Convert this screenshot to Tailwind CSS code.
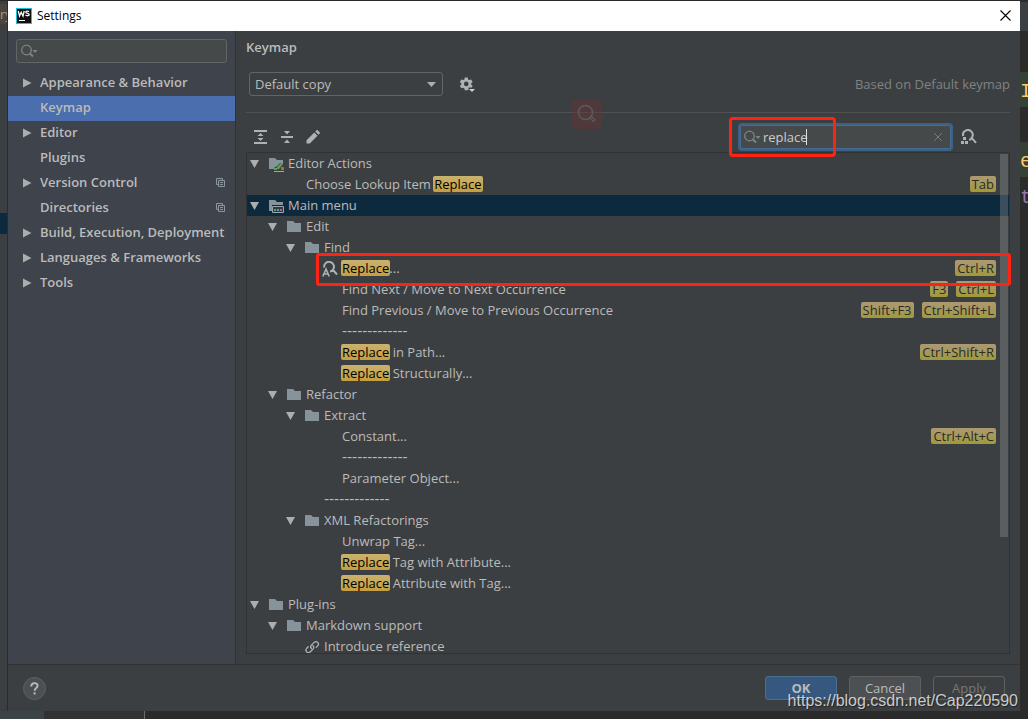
<!DOCTYPE html>
<html lang="en">
<head>
<meta charset="utf-8">
<title>Settings</title>
<script src="https://cdn.jsdelivr.net/npm/@tailwindcss/browser@4"></script>
</head>
<body class="relative h-screen overflow-hidden bg-[#2b2b2b] font-['Open_Sans','Noto_Sans',sans-serif] text-[13px] leading-[21px] text-[#bbbbbb]">

<svg class="hidden" aria-hidden="true">
  <symbol id="down" viewBox="0 0 10 10"><path d="M0 1h9L4.500 9z" fill="#adadad"/></symbol>
  <symbol id="right" viewBox="0 0 10 10"><path d="M0 0.500v9L8.500 5z" fill="#adadad"/></symbol>
  <symbol id="folder" viewBox="0 0 16 16"><path d="M0 2h6l2 2h6v9H0z" fill="#87939a"/></symbol>
  <symbol id="lens" viewBox="0 0 18 14"><g fill="none" stroke="#7b8489"><circle cx="5.500" cy="6" r="4.800" stroke-width="1.300"/><path d="M9 9.500l3 3" stroke-width="2"/></g><path d="M11.500 6h5L14 9z" fill="#7b8489"/></symbol>
  <symbol id="copy" viewBox="0 0 10 10"><path d="M2.500 6.500h-2v-6h6v2M2.500 2.500h6v6h-6zM4 4.500h3M4 6.500h3" fill="none" stroke="#8c979d"/></symbol>
</svg>

<!-- Editor window behind the dialog -->
<div class="absolute inset-y-0 left-0 w-[7px] overflow-hidden bg-[#3c3f41]">
  <div class="absolute inset-x-0 top-1 h-5 overflow-hidden bg-[#4b453c] text-[#a09a90] leading-5">ry</div>
  <div class="absolute inset-x-0 top-[213px] h-[21px] bg-[#0d293e]"></div>
</div>
<div class="absolute top-0 left-0 right-0 h-px bg-[#2b2b2b]"></div>
<div class="absolute inset-y-0 right-0 w-2 overflow-hidden font-['Liberation_Mono',monospace] text-[20px]">
  <div class="absolute inset-x-0 top-[2px] h-[29px] bg-[#3c3f41]"></div>
  <div class="absolute inset-x-0 top-[72px] h-[35px] bg-[#344134] leading-[40px] text-[#ffc66d]">I</div>
  <div class="absolute inset-x-0 top-[142px] h-[35px] bg-[#344134] leading-[40px] text-[#ffc66d]">e</div>
  <div class="absolute inset-x-0 top-[178px] h-[35px] leading-[40px] text-[#9876aa]">t</div>
</div>
<div class="absolute bottom-0 left-0 flex h-2">
  <div class="w-11 bg-[#3c4347]"></div>
  <div class="w-[101px] border-r border-[#6b6b6b] bg-[#323232]"></div>
</div>

<!-- Settings dialog -->
<div class="relative flex h-full flex-col px-2 pt-px pb-2">
<div role="dialog" aria-label="Settings" class="flex min-h-0 flex-1 flex-col bg-[#3c3f41] shadow-[-1px_0_0_#2b2b2b]">
  <header class="flex h-[30px] shrink-0 items-center bg-white pr-[7px] pl-2 text-black">
    <svg class="size-4" viewBox="0 0 16 16" aria-hidden="true"><rect width="16" height="16" fill="#19c0d8"/><rect x="1" y="1" width="14" height="14" fill="#101010"/><path d="M2.300 3l1.200 5L5.200 4.200 7 8l1.200-5M13 3.800c-1.200-1-3.200-.8-3.200.5 0 1.500 3.400.8 3.400 2.300 0 1.300-2.400 1.500-3.700.5" fill="none" stroke="#fff" stroke-width="1.300"/><path d="M3 12h6v1H3z" fill="#fff"/></svg>
    <h1 class="ml-[5px] flex-1 pb-px text-[12px]">Settings</h1>
    <button aria-label="Close" class="p-0.5 pb-1"><svg class="size-[11px]" viewBox="0 0 11 11"><path d="M.5.5l10 10M10.500.5l-10 10" stroke="#000" stroke-width="1.100"/></svg></button>
  </header>

  <div class="flex min-h-0 flex-1">
    <nav class="flex w-[228px] shrink-0 flex-col border-r border-[#323232] bg-[#3e434c] font-semibold" aria-label="Settings sections">
      <label class="mx-2 my-2 flex h-6 items-center rounded-[3px] border border-[#646464] bg-[#45494a] pl-1">
        <svg class="h-[14px] w-[18px]"><use href="#lens"/></svg>
        <input aria-label="Search settings" class="min-w-0 flex-1 font-normal outline-none">
      </label>
      <a href="#" class="flex h-[25px] items-center pb-0.5 pl-[15px]"><svg class="mr-[7px] size-[10px]"><use href="#right"/></svg>Appearance &amp; Behavior</a>
      <a href="#" aria-current="page" class="flex h-[25px] items-center bg-[#4b6eaf] pb-0.5 pl-8">Keymap</a>
      <a href="#" class="flex h-[25px] items-center pb-0.5 pl-[15px]"><svg class="mr-[7px] size-[10px]"><use href="#right"/></svg>Editor</a>
      <a href="#" class="flex h-[25px] items-center pb-0.5 pl-8">Plugins</a>
      <a href="#" class="flex h-[25px] items-center pr-[9px] pb-0.5 pl-[15px]"><svg class="mr-[7px] size-[10px]"><use href="#right"/></svg><span class="flex-1">Version Control</span><svg class="size-[10px]"><use href="#copy"/></svg></a>
      <a href="#" class="flex h-[25px] items-center pr-[9px] pb-0.5 pl-8"><span class="flex-1">Directories</span><svg class="size-[10px]"><use href="#copy"/></svg></a>
      <a href="#" class="flex h-[25px] items-center pb-0.5 pl-[15px] whitespace-nowrap"><svg class="mr-[7px] size-[10px]"><use href="#right"/></svg>Build, Execution, Deployment</a>
      <a href="#" class="flex h-[25px] items-center pb-0.5 pl-[15px]"><svg class="mr-[7px] size-[10px]"><use href="#right"/></svg>Languages &amp; Frameworks</a>
      <a href="#" class="flex h-[25px] items-center pb-0.5 pl-[15px]"><svg class="mr-[7px] size-[10px]"><use href="#right"/></svg>Tools</a>
    </nav>

    <main class="relative flex min-w-0 flex-1 flex-col px-[10px] pb-[10px]">
      <h2 class="flex h-8 shrink-0 items-center font-semibold">Keymap</h2>
      <div class="mt-[9px] mb-4 flex h-6 shrink-0 items-center pl-[3px]">
        <div class="relative">
          <select aria-label="Keymap" class="block h-6 w-[194px] appearance-none rounded-[3px] border border-[#646464] bg-[#3c3f41] pl-[5px] leading-5 outline-none"><option>Default copy</option></select>
          <svg class="pointer-events-none absolute top-[10px] right-[6px] h-[5px] w-[10px]" viewBox="0 0 10 5"><path d="M0 0h9L4.500 5z" fill="#adadad"/></svg>
        </div>
        <button aria-label="Keymap actions" class="ml-4"><svg class="size-4" viewBox="0 0 16 16"><path fill="#afb1b3" fill-rule="evenodd" d="M5.800 1.500h2.900l.4 1.900 1.200.7 1.900-.6 1.400 2.400-1.400 1.300v1.400l1.400 1.300-.8 1.500H9.500v2l-.8.900H5.800l-.4-1.900-1.200-.7-1.900.6L.9 9.900l1.400-1.300V7.200L.9 5.900l1.400-2.400 1.900.6 1.200-.7zM7.250 5.600a2.300 2.300 0 100 4.600 2.300 2.300 0 000-4.600z"/><path d="M10 13h6l-3 3z" fill="#d0d0d0"/></svg></button>
        <p class="ml-auto text-[#7f8284]">Based on Default keymap</p>
      </div>
      <div class="h-px shrink-0 bg-[#515151]"></div>
      <div class="flex shrink-0 items-center pt-[10px] pb-px">
        <button aria-label="Expand all" class="ml-[7px]"><svg class="size-4" viewBox="0 0 16 16"><path d="M1 1h13v2H1zM1 13h13v2H1zM7.500 4l3 3h-6zM7.500 12l3-3h-6z" fill="#afb1b3"/></svg></button>
        <button aria-label="Collapse all" class="ml-[10px]"><svg class="size-4" viewBox="0 0 16 16"><path d="M2 7h12v2H2zM8 5.500l3-3.500H5zM8 10.500l3 3.500H5z" fill="#afb1b3"/></svg></button>
        <button aria-label="Edit shortcut" class="ml-[10px]"><svg class="size-4" viewBox="0 0 16 16"><path d="M1.500 14.500v-3.300l7.800-7.700 3.200 3.200-7.700 7.800zM10.200 2.600l1.200-1.200c.5-.5 1-.5 1.500 0l1.800 1.800c.5.500.5 1 0 1.400L13.400 5.800z" fill="#afb1b3"/></svg></button>
        <label class="relative ml-auto flex h-7 w-[215px] items-center rounded-[4px] border-2 border-[#3d6185] bg-[#45494a] pl-1 text-[#cccccc] shadow-[inset_0_0_0_1px_#466d94]">
          <svg class="h-[14px] w-[18px]"><use href="#lens"/></svg>
          <input aria-label="Search actions" value="replace" class="ml-px min-w-0 flex-1 outline-none">
          <span class="absolute top-1 left-[66px] h-4 w-px bg-[#dddddd]"></span>
          <button aria-label="Clear search" class="mr-[9px]"><svg class="size-2" viewBox="0 0 8 8"><path d="M0 0l8 8M8 0L0 8" stroke="#767a7c"/></svg></button>
        </label>
        <button aria-label="Find actions by shortcut" class="mr-[33px] ml-2"><svg class="size-4" viewBox="0 0 16 16"><path d="M2.200 7A4.800 4.800 0 1110 9.500M8 10.800c1.300 0 2.200-.6 3-1.600l4 4.600" fill="none" stroke="#afb1b3" stroke-width="2"/><path d="M0 12h3v3H0zM4 12h3v3H4zM2 8h3v3H2z" fill="#afb1b3"/></svg></button>
      </div>

      <div class="relative min-h-0 flex-1 overflow-hidden border border-[#323232]">
        <ul role="tree" aria-label="Actions">
          <li role="treeitem" aria-expanded="true" class="flex h-[21px] items-center pl-[3px]"><svg class="mr-[9px] size-[10px]"><use href="#down"/></svg><svg class="mr-[3px] size-4" viewBox="0 0 16 16"><path d="M0 2h6l2 2h6v4l-3-1-3 3-3 2v1H0z" fill="#87939a"/><path d="M5 12h3v2H5zM8 11l4-4 2 1-4 5H8z" fill="#57a64a"/><path d="M12 11h3v3h-3z" fill="#c75d3a"/><path d="M5 15.500h10" stroke="#9aa7b0"/></svg>Editor Actions</li>
          <li role="treeitem" class="flex h-[21px] items-center pr-[13px] pl-[59px]"><span class="flex-1">Choose Lookup Item <mark class="-mx-px inline-block rounded-[2px] bg-linear-to-b from-[#c9b26e] to-[#c59f3d] px-px leading-4 text-black">Replace</mark></span><kbd class="mb-px rounded-[2px] bg-linear-to-b from-[#ad9873] to-[#a09a36] px-[2px] font-[inherit] leading-4 text-[#2b2b2b]">Tab</kbd></li>
          <li role="treeitem" aria-expanded="true" aria-selected="true" class="flex h-[21px] items-center bg-[#0d293e] pl-[3px]"><svg class="mr-[9px] size-[10px]"><use href="#down"/></svg><svg class="mr-[3px] size-4" viewBox="0 0 16 16"><path d="M0 2h6l2 2h6v3H3v6H0z" fill="#87939a"/><path d="M3.500 8.500h11v6h-11z" fill="#2d3b45" stroke="#9aa7b0"/><path d="M5 11h2v2H5z" fill="#57a64a"/><path d="M8 11h2v2H8z" fill="#40a0d8"/><path d="M11 11h2v2h-2z" fill="#d06040"/></svg>Main menu</li>
          <li role="treeitem" aria-expanded="true" class="flex h-[21px] items-center pl-[21px]"><svg class="mr-[9px] size-[10px]"><use href="#down"/></svg><svg class="mr-[3px] size-4"><use href="#folder"/></svg>Edit</li>
          <li role="treeitem" aria-expanded="true" class="flex h-[21px] items-center pl-[39px]"><svg class="mr-[9px] size-[10px]"><use href="#down"/></svg><svg class="mr-[3px] size-4"><use href="#folder"/></svg>Find</li>
          <li role="treeitem" class="flex h-[21px] items-center pr-[13px] pl-[75px]"><svg class="mr-1 size-4" viewBox="0 0 16 16"><path d="M2.200 6.500A4.900 4.900 0 1111 8.600M8 10.400c1.300 0 2.200-.6 3-1.500l4 4.600" fill="none" stroke="#afb1b3" stroke-width="2"/><path d="M.8 15.500L4 8l3.200 7.500M2 13h4" fill="none" stroke="#afb1b3" stroke-width="1.600"/></svg><span class="flex-1"><mark class="-mx-px inline-block rounded-[2px] bg-linear-to-b from-[#c9b26e] to-[#c59f3d] px-px leading-4 text-black">Replace</mark>...</span><kbd class="mb-px rounded-[2px] bg-linear-to-b from-[#ad9873] to-[#a09a36] px-[2px] font-[inherit] leading-4 text-[#2b2b2b]">Ctrl+R</kbd></li>
          <li role="treeitem" class="flex h-[21px] items-center gap-2 pr-[13px] pl-[95px]"><span class="flex-1">Find Next / Move to Next Occurrence</span><kbd class="mb-px rounded-[2px] bg-linear-to-b from-[#ad9873] to-[#a09a36] px-[2px] font-[inherit] leading-4 text-[#2b2b2b]">F3</kbd><kbd class="mb-px rounded-[2px] bg-linear-to-b from-[#ad9873] to-[#a09a36] px-[2px] font-[inherit] leading-4 text-[#2b2b2b]">Ctrl+L</kbd></li>
          <li role="treeitem" class="flex h-[21px] items-center gap-2 pr-[13px] pl-[95px]"><span class="flex-1">Find Previous / Move to Previous Occurrence</span><kbd class="mb-px rounded-[2px] bg-linear-to-b from-[#ad9873] to-[#a09a36] px-[2px] font-[inherit] leading-4 text-[#2b2b2b]">Shift+F3</kbd><kbd class="mb-px rounded-[2px] bg-linear-to-b from-[#ad9873] to-[#a09a36] px-[2px] font-[inherit] leading-4 text-[#2b2b2b]">Ctrl+Shift+L</kbd></li>
          <li role="treeitem" class="flex h-[21px] items-center pl-[95px] font-['DejaVu_Sans',sans-serif] text-[14px]">-------------</li>
          <li role="treeitem" class="flex h-[21px] items-center pr-[13px] pl-[95px]"><span class="flex-1"><mark class="-mx-px inline-block rounded-[2px] bg-linear-to-b from-[#c9b26e] to-[#c59f3d] px-px leading-4 text-black">Replace</mark> in Path...</span><kbd class="mb-px rounded-[2px] bg-linear-to-b from-[#ad9873] to-[#a09a36] px-[2px] font-[inherit] leading-4 text-[#2b2b2b]">Ctrl+Shift+R</kbd></li>
          <li role="treeitem" class="flex h-[21px] items-center pl-[95px]"><span><mark class="-mx-px inline-block rounded-[2px] bg-linear-to-b from-[#c9b26e] to-[#c59f3d] px-px leading-4 text-black">Replace</mark> Structurally...</span></li>
          <li role="treeitem" aria-expanded="true" class="flex h-[21px] items-center pl-[21px]"><svg class="mr-[9px] size-[10px]"><use href="#down"/></svg><svg class="mr-[3px] size-4"><use href="#folder"/></svg>Refactor</li>
          <li role="treeitem" aria-expanded="true" class="flex h-[21px] items-center pl-[39px]"><svg class="mr-[9px] size-[10px]"><use href="#down"/></svg><svg class="mr-[3px] size-4"><use href="#folder"/></svg>Extract</li>
          <li role="treeitem" class="flex h-[21px] items-center pr-[13px] pl-[95px]"><span class="flex-1">Constant...</span><kbd class="mb-px rounded-[2px] bg-linear-to-b from-[#ad9873] to-[#a09a36] px-[2px] font-[inherit] leading-4 text-[#2b2b2b]">Ctrl+Alt+C</kbd></li>
          <li role="treeitem" class="flex h-[21px] items-center pl-[95px] font-['DejaVu_Sans',sans-serif] text-[14px]">-------------</li>
          <li role="treeitem" class="flex h-[21px] items-center pl-[95px]">Parameter Object...</li>
          <li role="treeitem" class="flex h-[21px] items-center pl-[77px] font-['DejaVu_Sans',sans-serif] text-[14px]">-------------</li>
          <li role="treeitem" aria-expanded="true" class="flex h-[21px] items-center pl-[39px]"><svg class="mr-[9px] size-[10px]"><use href="#down"/></svg><svg class="mr-[3px] size-4"><use href="#folder"/></svg>XML Refactorings</li>
          <li role="treeitem" class="flex h-[21px] items-center pl-[95px]">Unwrap Tag...</li>
          <li role="treeitem" class="flex h-[21px] items-center pl-[95px]"><span><mark class="-mx-px inline-block rounded-[2px] bg-linear-to-b from-[#c9b26e] to-[#c59f3d] px-px leading-4 text-black">Replace</mark> Tag with Attribute...</span></li>
          <li role="treeitem" class="flex h-[21px] items-center pl-[95px]"><span><mark class="-mx-px inline-block rounded-[2px] bg-linear-to-b from-[#c9b26e] to-[#c59f3d] px-px leading-4 text-black">Replace</mark> Attribute with Tag...</span></li>
          <li role="treeitem" aria-expanded="true" class="flex h-[21px] items-center pl-[3px]"><svg class="mr-[9px] size-[10px]"><use href="#down"/></svg><svg class="mr-[3px] size-4"><use href="#folder"/></svg>Plug-ins</li>
          <li role="treeitem" aria-expanded="true" class="flex h-[21px] items-center pl-[21px]"><svg class="mr-[9px] size-[10px]"><use href="#down"/></svg><svg class="mr-[3px] size-4"><use href="#folder"/></svg>Markdown support</li>
          <li role="treeitem" class="flex h-[21px] items-center pl-[58px]"><svg class="mr-[3px] size-4" viewBox="0 0 16 16"><g fill="none" stroke="#afb1b3" stroke-width="1.300" stroke-linecap="round"><path d="M6.500 9.500C5.300 8.300 5.500 7 6.400 6.100l2.700-2.700c2.600-2.200 5.800.9 3.600 3.500l-1.500 1.500"/><path d="M7.900 6.700c1.300 1.100 1 2.500.1 3.400l-2.700 2.700C2.700 15 -.5 11.900 1.700 9.300l1.500-1.500"/></g></svg>Introduce reference</li>
        </ul>
        <div class="absolute top-px right-px h-[383px] w-2 bg-[#a6a6a6]/30"></div>
      </div>

      <div class="absolute top-[68px] left-[336px] flex size-[30px] items-center justify-center rounded-[4px] bg-[#6e3232]/40">
        <svg class="size-5" viewBox="0 0 20 20"><g fill="none" stroke="#5d5a5c"><circle cx="8.500" cy="8.500" r="7" stroke-width="1.500"/><path d="M13 13l1.500-.8 3.500 3.500-1.700 1.700-3.300-3.300z" stroke-width="1.300"/></g></svg>
      </div>
      <div class="pointer-events-none absolute top-[86px] right-[184px] h-10 w-[107px] rounded-[4px] border-3 border-[#ff2314]"></div>
      <div class="pointer-events-none absolute top-[222px] right-[9px] left-[80px] h-[33px] rounded-[3px] border-3 border-[#ff2314]"></div>
    </main>
  </div>

  <footer class="flex h-[47px] shrink-0 items-center gap-3 border-t border-[#323232] pr-[15px] pl-[15px]">
    <button aria-label="Help" class="mr-auto flex size-[23px] items-center justify-center rounded-full border border-[#5e6060] bg-[#4c5052]"><svg class="size-[13px]" viewBox="0 0 13 13"><path d="M3.200 4.500C3.200 0 9.800.2 9.600 4c-.1 2-3 2.200-3 4.700M6.600 10.300v2.200" fill="none" stroke="#bbb" stroke-width="1.900"/></svg></button>
    <button class="h-6 w-[72px] rounded-[3px] border border-[#4c708c] bg-[#365880] font-bold">OK</button>
    <button class="h-6 w-[72px] rounded-[3px] border border-[#5e6060] bg-[#4c5052]">Cancel</button>
    <button disabled class="h-6 w-[72px] rounded-[3px] border border-[#5e6060] text-[#777777]">Apply</button>
  </footer>
</div>
</div>
<p class="absolute right-[10px] bottom-1.5 font-['Liberation_Sans',Arial,sans-serif] text-[16px] leading-6 text-white/75 [text-shadow:1px_1px_1px_rgb(0_0_0/0.5)]">https://blog.csdn.net/Cap220590</p>
</body>
</html>
